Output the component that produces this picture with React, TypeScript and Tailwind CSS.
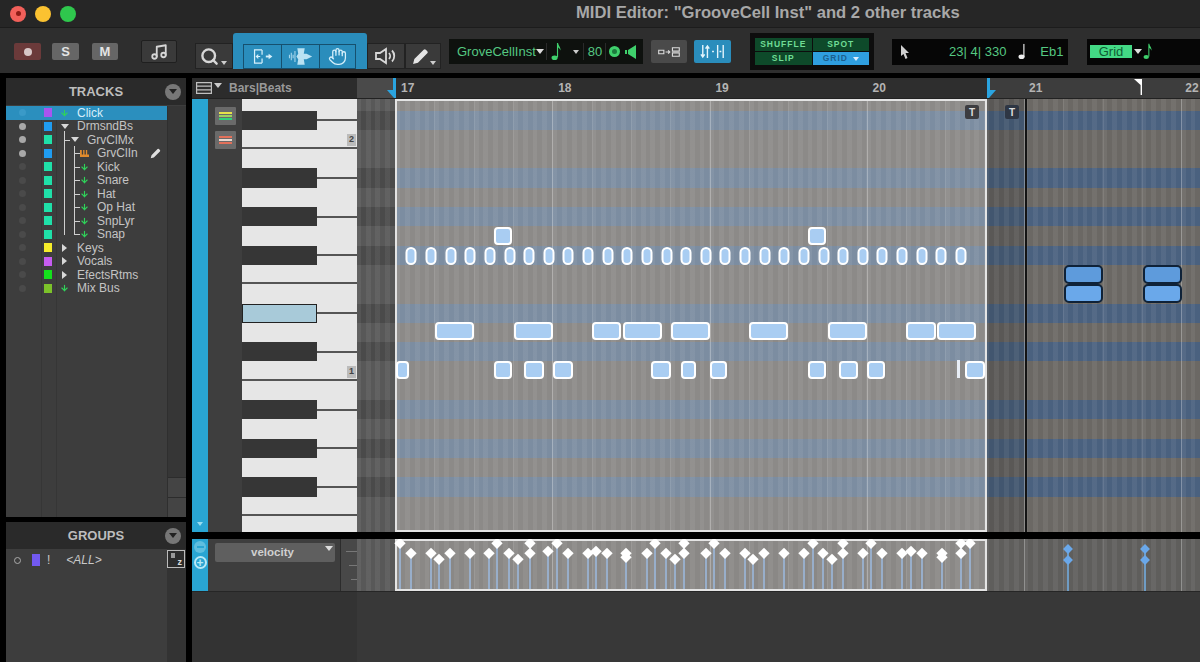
import { ArrowDown, Hand, Music, Search } from "lucide-react";

const tracks = [
	{ name: "Click", color: "bg-[#a855f0]", dot: "bg-[#3a9ac8]", indent: "ml-[8px]", icon: "arrow" },
	{ name: "DrmsndBs", color: "bg-[#1f9cf0]", dot: "bg-[#a8a8a8]", indent: "ml-[8px]", icon: "down" },
	{ name: "GrvClMx", color: "bg-[#1fe0a8]", dot: "bg-[#a8a8a8]", indent: "ml-[18px]", icon: "down" },
	{ name: "GrvClIn", color: "bg-[#1f9cf0]", dot: "bg-[#a8a8a8]", indent: "ml-[28px]", icon: "inst" },
	{ name: "Kick", color: "bg-[#1fe0a8]", dot: "bg-[#4a4a4a]", indent: "ml-[28px]", icon: "arrow" },
	{ name: "Snare", color: "bg-[#1fe0a8]", dot: "bg-[#4a4a4a]", indent: "ml-[28px]", icon: "arrow" },
	{ name: "Hat", color: "bg-[#1fe0a8]", dot: "bg-[#4a4a4a]", indent: "ml-[28px]", icon: "arrow" },
	{ name: "Op Hat", color: "bg-[#1fe0a8]", dot: "bg-[#4a4a4a]", indent: "ml-[28px]", icon: "arrow" },
	{ name: "SnpLyr", color: "bg-[#1fe0a8]", dot: "bg-[#4a4a4a]", indent: "ml-[28px]", icon: "arrow" },
	{ name: "Snap", color: "bg-[#1fe0a8]", dot: "bg-[#4a4a4a]", indent: "ml-[28px]", icon: "arrow" },
	{ name: "Keys", color: "bg-[#f5ec2a]", dot: "bg-[#4a4a4a]", indent: "ml-[8px]", icon: "right" },
	{ name: "Vocals", color: "bg-[#c65cf0]", dot: "bg-[#4a4a4a]", indent: "ml-[8px]", icon: "right" },
	{ name: "EfectsRtms", color: "bg-[#14e01c]", dot: "bg-[#4a4a4a]", indent: "ml-[8px]", icon: "right" },
	{ name: "Mix Bus", color: "bg-[#7cc22a]", dot: "bg-[#4a4a4a]", indent: "ml-[8px]", icon: "arrow" },
];

// one entry per pitch row, top to bottom
const rows = [
	{ black: false, line: false },
	{ black: true, line: false },
	{ black: false, line: true, label: "2" },
	{ black: false, line: false },
	{ black: true, line: false },
	{ black: false, line: false },
	{ black: true, line: false },
	{ black: false, line: false },
	{ black: true, line: false },
	{ black: false, line: true },
	{ black: false, line: false },
	{ black: true, line: false, active: true },
	{ black: false, line: false },
	{ black: true, line: false },
	{ black: false, line: true, label: "1" },
	{ black: false, line: false },
	{ black: true, line: false },
	{ black: false, line: false },
	{ black: true, line: false },
	{ black: false, line: false },
	{ black: true, line: false },
	{ black: false, line: true },
	{ black: false, line: false },
];

const pills = [411, 431, 451, 470, 490, 510, 529, 549, 568, 588, 608, 627, 647, 667, 686, 706, 725, 745, 765, 784, 804, 824, 843, 863, 882, 902, 922, 941, 961];

const notes: [number, number, number][] = [
	[494, 512, 236], [808, 826, 236],
	[435, 474, 331], [514, 553, 331], [592, 621, 331], [623, 662, 331], [671, 710, 331], [749, 788, 331], [828, 867, 331], [906, 936, 331], [937, 976, 331],
	[396, 409, 370], [494, 512, 370], [524, 544, 370], [553, 573, 370], [651, 671, 370], [681, 696, 370], [710, 727, 370], [808, 826, 370], [839, 858, 370], [867, 885, 370], [965, 985, 370],
];

const velocities: [number, number][] = [
	[400, 543], [411, 553], [431, 553], [439, 559], [450, 553], [470, 553], [489, 553], [497, 543], [509, 553], [518, 559], [530, 543], [530, 553], [548, 551], [557, 543], [568, 553], [588, 553], [596, 551], [607, 553], [626, 553], [626, 557], [647, 553], [655, 543], [666, 553], [675, 559], [684, 543], [684, 553], [706, 553], [714, 543], [725, 553], [745, 553], [753, 559], [764, 553], [784, 553], [804, 553], [813, 543], [823, 553], [832, 559], [843, 543], [843, 553], [863, 553], [871, 543], [882, 553], [902, 553], [911, 551], [922, 553], [942, 553], [942, 557], [961, 543], [961, 553], [970, 543],
];

const outVelocities: [number, number][] = [[1068, 549], [1068, 560], [1145, 549], [1145, 560]];

const gridLines =
	"bg-[repeating-linear-gradient(90deg,rgba(255,255,255,.2)_0,rgba(255,255,255,.2)_1px,transparent_1px,transparent_157.2px),repeating-linear-gradient(90deg,rgba(255,255,255,.09)_0,rgba(255,255,255,.09)_1px,transparent_1px,transparent_39.3px),repeating-linear-gradient(90deg,rgba(255,255,255,.06)_0,rgba(255,255,255,.06)_4.9px,transparent_4.9px,transparent_9.82px)]";

function NoteGlyph({ className }: { className: string }) {
	return (
		<svg viewBox="0 0 10 20" className={className} fill="currentColor">
			<ellipse cx="3.5" cy="16.5" rx="3.2" ry="2.4" />
			<path d="M6 16V1h1.2c.3 3 2.8 4 2.6 8-.8-2-2-3-2.6-3.2V16z" />
		</svg>
	);
}

function TrackIcon({ icon }: { icon: string }) {
	if (icon === "arrow")
		return <ArrowDown size={12} strokeWidth={3} className="text-[#2fd45a]" />;
	if (icon === "down")
		return <div className="h-0 w-0 border-x-[4px] border-t-[5px] border-x-transparent border-t-[#d8d8d8]" />;
	if (icon === "right")
		return <div className="h-0 w-0 border-y-[4px] border-l-[5px] border-y-transparent border-l-[#d8d8d8]" />;
	return (
		<svg viewBox="0 0 10 8" className="h-[9px] w-[11px] text-[#e08a2c]" fill="currentColor">
			<path d="M0 0h2v5h1.5V0h1.5v5h1.5V0H8v5h2v3H0z" />
		</svg>
	);
}

function SmallPencil({ className }: { className: string }) {
	return (
		<svg viewBox="0 0 16 16" className={className} fill="currentColor">
			<path d="M1 15l1.2-4.6L11 1.6a1.4 1.4 0 012 0l1.4 1.4a1.4 1.4 0 010 2L5.6 13.8z" />
		</svg>
	);
}

function SidebarHeader({ title }: { title: string }) {
	return (
		<div className="flex h-[27px] items-center bg-[#2a2a2a]">
			<div className="w-[180px] text-center text-[13px] font-bold text-[#bdbdbd]">{title}</div>
			<div className="absolute left-[159px] flex h-[16px] w-[16px] items-center justify-center rounded-full bg-[#777]">
				<div className="h-0 w-0 border-x-[4px] border-t-[5px] border-x-transparent border-t-[#222]" />
			</div>
		</div>
	);
}

function Sidebar() {
	return (
		<aside className="ml-[6px] flex w-[180px] flex-col gap-[5px]">
			<div className="relative flex h-[439px] flex-col bg-[#3d3d3d]">
				<SidebarHeader title="TRACKS" />
				<div className="mt-[1px] flex flex-1">
					<div className="relative w-[161px]">
						<div className="absolute inset-y-0 left-[35px] w-px bg-[#363636]" />
						<div className="absolute inset-y-0 left-[50px] w-px bg-[#363636]" />
						<div className="absolute left-[58px] top-[25px] h-[104px] w-px bg-[#cfcfcf]" />
						<div className="absolute left-[68px] top-[40px] h-[89px] w-px bg-[#cfcfcf]" />
						<div className="absolute left-[59px] top-[34px] h-px w-[5px] bg-[#cfcfcf]" />
						{[47, 61, 74, 88, 101, 115, 128].map((y) => (
							<div key={y} className="absolute left-[69px] h-px w-[5px] bg-[#cfcfcf]" style={{ top: y }} />
						))}
						{tracks.map((t, i) => (
							<div
								key={t.name}
								className={`relative flex h-[13.5px] items-center ${i === 0 ? "bg-[#2b8fbe]" : ""}`}
							>
								<div className={`ml-[13px] h-[7px] w-[7px] rounded-full ${t.dot}`} />
								<div className={`ml-[18px] h-[9px] w-[8px] ${t.color}`} />
								<div className={`${t.indent} flex w-[9px] shrink-0 justify-center`}>
									<TrackIcon icon={t.icon} />
								</div>
								<span className={`ml-[8px] text-[12px] leading-none ${i === 0 ? "text-[#d6eefa]" : "text-[#c4c4c4]"}`}>{t.name}</span>
								{t.icon === "inst" && <SmallPencil className="ml-[12px] h-[11px] w-[11px] text-[#e0e0e0]" />}
							</div>
						))}
					</div>
					<div className="flex flex-1 flex-col justify-end border-l border-[#2f2f2f] bg-[#363636]">
						<div className="h-[20px] border-t border-[#2c2c2c] bg-[#444]" />
						<div className="h-[20px] border-t border-[#2c2c2c] bg-[#444]" />
					</div>
				</div>
			</div>
			<div className="relative flex flex-1 flex-col bg-[#3d3d3d]">
				<SidebarHeader title="GROUPS" />
				<div className="flex flex-1">
					<div className="flex h-[20px] w-[161px] items-center pt-[2px]">
						<div className="ml-[8px] h-[7px] w-[7px] rounded-full border border-[#aaa]" />
						<div className="ml-[11px] h-[12px] w-[8px] bg-[#7259f0]" />
						<span className="ml-[7px] text-[12px] text-[#c8c8c8]">!</span>
						<span className="ml-[16px] text-[12px] italic text-[#c8c8c8]">&lt;ALL&gt;</span>
					</div>
					<div className="flex flex-1 flex-col bg-[#333]">
						<div className="relative mt-[1px] flex h-[18px] w-[18px] items-end justify-end border border-[#bbb] bg-[#2c2c2c] pr-[2px] text-[9px] font-bold leading-none text-[#ddd]">
							<div className="absolute left-[3px] top-[2px] h-[5px] w-[4px] bg-[#999]" />
							z
						</div>
					</div>
				</div>
			</div>
		</aside>
	);
}

function ToolBtn({ children, className }: { children: React.ReactNode; className: string }) {
	return <div className={`flex items-center justify-center ${className}`}>{children}</div>;
}

function Toolbar() {
	return (
		<div className="flex h-[46px] items-center border-t border-[#1c1c1c] bg-[#2e2e2e] pl-[14px] pt-[2px]">
			<ToolBtn className="h-[17px] w-[27px] rounded-[2px] bg-[#6b3a3a]">
				<div className="h-[8px] w-[8px] rounded-full bg-[#d8c8c8]" />
			</ToolBtn>
			<ToolBtn className="ml-[11px] h-[17px] w-[27px] rounded-[2px] bg-[#666] text-[13px] font-bold text-[#e4e4e4]">S</ToolBtn>
			<ToolBtn className="ml-[13px] h-[17px] w-[26px] rounded-[2px] bg-[#666] text-[13px] font-bold text-[#e4e4e4]">M</ToolBtn>
			<ToolBtn className="ml-[23px] h-[23px] w-[36px] rounded-[2px] border border-[#1f1f1f] bg-[#3a3a3a]">
				<Music size={18} strokeWidth={2.4} className="text-[#d6d6d6]" />
			</ToolBtn>
			<ToolBtn className="relative mb-[4px] ml-[18px] h-[26px] w-[38px] self-end border border-[#222] bg-[#3a3a3a]">
				<Search size={19} strokeWidth={3} className="mr-[10px] text-[#d8d8d8]" />
				<div className="absolute bottom-[3px] right-[5px] h-0 w-0 border-x-[3px] border-t-[4px] border-x-transparent border-t-[#ccc]" />
			</ToolBtn>
			<div className="mb-[4px] flex h-[36px] w-[134px] items-end self-end rounded-t-[3px] bg-[#2a8dbc] pl-[10px]">
				<ToolBtn className="h-[25px] w-[39px] border border-[#16506e] bg-[#2a8dbc]">
					<svg viewBox="0 0 24 16" className="h-[15px] w-[24px] text-[#d6f0fb]" fill="none" stroke="currentColor" strokeWidth="1.3">
						<path d="M11 1H3v14h8M11 1v5M11 10v5M9 8H5M7 6L5 8l2 2" />
						<path d="M15 8h4" strokeWidth="2" />
						<path d="M18 5l4 3-4 3z" fill="currentColor" stroke="none" />
					</svg>
				</ToolBtn>
				<ToolBtn className="h-[25px] w-[38px] border-y border-r border-[#16506e] bg-[#2a8dbc]">
					<svg viewBox="0 0 28 18" className="h-[17px] w-[26px] text-[#b9e2f3]" fill="currentColor">
						<path d="M1 7h1v4H1zM3 5h1v8H3zM5 7h1v4H5zM7 3h1v12H7z" />
						<path d="M10 0h8l-1 6h3l6 3-6 3h-3l1 6h-8l1-6-2-3 2-3z" />
					</svg>
				</ToolBtn>
				<ToolBtn className="h-[25px] w-[36px] border-y border-r border-[#16506e] bg-[#2a8dbc]">
					<Hand size={19} strokeWidth={1.6} className="text-[#d6f0fb]" />
				</ToolBtn>
			</div>
			<ToolBtn className="mb-[4px] h-[26px] w-[38px] self-end border border-[#222] bg-[#3a3a3a]">
				<svg viewBox="0 0 22 18" className="h-[18px] w-[22px] text-[#d8d8d8]" fill="none" stroke="currentColor" strokeWidth="1.8">
					<path d="M1 6h4l6-4v14l-6-4H1zM14 6c1.5 1.6 1.5 4.4 0 6M17 3.5c3 3 3 8 0 11" />
				</svg>
			</ToolBtn>
			<ToolBtn className="relative mb-[4px] h-[26px] w-[36px] self-end border border-[#222] bg-[#3a3a3a]">
				<SmallPencil className="mr-[6px] h-[17px] w-[17px] text-[#e4e4e4]" />
				<div className="absolute bottom-[3px] right-[4px] h-0 w-0 border-x-[3px] border-t-[4px] border-x-transparent border-t-[#ccc]" />
			</ToolBtn>
			<div className="ml-[8px] flex h-[25px] w-[194px] items-center bg-[#0e110e] pl-[8px] text-[13px] text-[#55c882]">
				<span>GroveCellInst</span>
				<div className="h-0 w-0 border-x-[4px] border-t-[5px] border-x-transparent border-t-[#ddd]" />
				<div className="ml-[2px] h-[17px] w-px bg-[#2a2a2a]" />
				<NoteGlyph className="ml-[4px] h-[19px] w-[10px] text-[#3fd06c]" />
				<div className="ml-[12px] h-0 w-0 border-x-[3px] border-t-[4px] border-x-transparent border-t-[#ccc]" />
				<div className="ml-[4px] h-[17px] w-px bg-[#2a2a2a]" />
				<span className="ml-[4px]">80</span>
				<div className="ml-[3px] h-[17px] w-px bg-[#2a2a2a]" />
				<div className="ml-[3px] flex h-[11px] w-[11px] items-center justify-center rounded-full bg-[#3fd06c]">
					<div className="h-[5px] w-[5px] rounded-full bg-[#1d7a3e]" />
				</div>
				<svg viewBox="0 0 11 14" className="ml-[5px] h-[14px] w-[11px] text-[#3fd06c]" fill="currentColor">
					<path d="M0 5h2v4H0zM3 5l8-5v14L3 9z" />
				</svg>
			</div>
			<ToolBtn className="ml-[8px] h-[23px] w-[36px] rounded-[2px] bg-[#4a4a4a]">
				<svg viewBox="0 0 26 14" className="h-[12px] w-[24px] text-[#dcdcdc]" fill="none" stroke="currentColor" strokeWidth="1.3">
					<path d="M1 5h6v4H1zM9 7h5M12 5l2 2-2 2M17 2h8v4h-8zM17 8h8v4h-8z" />
				</svg>
			</ToolBtn>
			<ToolBtn className="ml-[7px] h-[23px] w-[37px] rounded-[2px] bg-[#2a8dbc]">
				<svg viewBox="0 0 28 16" className="h-[15px] w-[26px] text-[#e4f5fc]" fill="none" stroke="currentColor" strokeWidth="1.5">
					<path d="M3 1v13M1 11l2 3 2-3M8 15V2M6 5l2-3 2 3M13 8h2M19 1v14M25 1v14M21 8h2" />
				</svg>
			</ToolBtn>
			<div className="ml-[19px] grid h-[37px] w-[124px] grid-cols-2 gap-px bg-[#0d0d0d] p-[5px] text-[8.5px] font-bold leading-none tracking-[1px] text-[#6fdc95]">
				<div className="flex items-center justify-center bg-[#0e4a2a]">SHUFFLE</div>
				<div className="flex items-center justify-center bg-[#0e4a2a]">SPOT</div>
				<div className="flex items-center justify-center bg-[#0e4a2a]">SLIP</div>
				<div className="flex items-center justify-center bg-[#2f9fe0] text-[#1c5f8e]">
					GRID
					<div className="ml-[5px] h-0 w-0 border-x-[3px] border-t-[4px] border-x-transparent border-t-[#dcefff]" />
				</div>
			</div>
			<div className="ml-[18px] flex h-[26px] w-[176px] items-center bg-[#060606] pl-[8px] text-[13px] text-[#55c882]">
				<svg viewBox="0 0 10 14" className="h-[14px] w-[10px] text-[#cfcfcf]" fill="currentColor">
					<path d="M1 0l8 8H5.5l2 5-2 1-2-5L1 11z" />
				</svg>
				<span className="ml-[39px]">23| 4| 330</span>
				<svg viewBox="0 0 8 18" className="ml-[12px] h-[17px] w-[8px] text-[#eee]" fill="currentColor">
					<ellipse cx="3.5" cy="14.5" rx="3.2" ry="2.4" />
					<rect x="5.4" y="1" width="1.2" height="14" />
				</svg>
				<span className="ml-[14px]">Eb1</span>
			</div>
			<div className="ml-[19px] flex h-[26px] flex-1 items-center bg-[#060606] pl-[3px]">
				<div className="flex h-[13px] w-[42px] items-center justify-center bg-[#43d985] text-[13px] text-[#0f5c33]">Grid</div>
				<div className="ml-[2px] h-0 w-0 border-x-[4px] border-t-[5px] border-x-transparent border-t-[#ddd]" />
				<NoteGlyph className="ml-[1px] h-[17px] w-[9px] text-[#3fd06c]" />
			</div>
		</div>
	);
}

function Ruler() {
	return (
		<div className="relative flex h-[21px] border-b border-[#222] text-[12px] font-bold text-[#b4b4b4]">
			<div className="flex w-[165px] items-center bg-[#2c2c2c] pl-[4px]">
				<svg viewBox="0 0 16 12" className="h-[12px] w-[16px] text-[#c0c0c0]" fill="none" stroke="currentColor" strokeWidth="1.2">
					<path d="M.6.6h14.8v10.8H.6zM.6 4.2h14.8M.6 7.8h14.8" />
				</svg>
				<div className="mb-[6px] ml-[2px] h-0 w-0 border-x-[4px] border-t-[5px] border-x-transparent border-t-[#ccc]" />
				<span className="ml-[7px] text-[#999]">Bars|Beats</span>
			</div>
			<div className="w-[38px] bg-[#4a4a4a]" />
			{["17", "18", "19"].map((b) => (
				<div key={b} className="flex w-[157.2px] shrink-0 items-center bg-[#2e2e2e] pl-[6px]">
					{b}
				</div>
			))}
			<div className="flex w-[120.4px] shrink-0 items-center bg-[#2e2e2e] pl-[6px]">20</div>
			<div className="flex flex-1 items-center bg-[#3d3d3d]">
				<span className="ml-[42px]">21</span>
				<span className="ml-[143px]">22</span>
			</div>
			<svg viewBox="0 0 9 20" className="absolute left-[195px] top-0 h-[20px] w-[9px] text-[#2aa4e0]" fill="currentColor">
				<path d="M9 0v20H7L0 12h6V0z" />
			</svg>
			<svg viewBox="0 0 9 20" className="absolute left-[795px] top-0 h-[20px] w-[9px] text-[#2aa4e0]" fill="currentColor">
				<path d="M0 0v20h2l7-8H3V0z" />
			</svg>
			<svg viewBox="0 0 9 18" className="absolute left-[942px] top-0 h-[18px] w-[9px] text-white" fill="currentColor">
				<path d="M0 1h8v16H6.6V7z" />
			</svg>
		</div>
	);
}

function Keys() {
	return (
		<div className="flex w-[115px] flex-col">
			{rows.map((r, i) => {
				const h = i === 0 ? "h-[11.6px]" : i === rows.length - 1 ? "h-[16.1px]" : "h-[19.3px]";
				if (r.black)
					return (
						<div key={i} className={`flex ${h} bg-[#e6e6e6]`}>
							<div className={`w-[75px] ${r.active ? "border border-[#222] bg-[#a8cad9]" : "bg-[#363636]"}`} />
							<div className="flex flex-1 items-center">
								<div className="h-[2px] w-full bg-[#555]" />
							</div>
						</div>
					);
				return (
					<div key={i} className={`flex ${h} items-end justify-end bg-[#e6e6e6] ${r.line ? "border-b-2 border-[#555]" : ""}`}>
						{r.label && (
							<span className="mb-[1px] mr-px flex h-[12px] w-[9px] items-center justify-center bg-[#bbb] text-[9px] font-bold text-[#444]">{r.label}</span>
						)}
					</div>
				);
			})}
		</div>
	);
}

function Grid() {
	return (
		<div className="relative flex flex-1 flex-col overflow-hidden">
			{rows.map((r, i) => {
				const h = i === 0 ? "h-[11.6px]" : i === rows.length - 1 ? "h-[16.1px]" : "h-[19.3px]";
				return (
					<div key={i} className={`flex ${h}`}>
						<div className={`w-[38px] ${r.black ? "bg-[#4a4a4a]" : "bg-[#585858]"}`} />
						<div className={`w-[592px] ${r.black ? "bg-[#7c8da1]" : "bg-[#8c8a88]"}`} />
						<div className={`w-[38px] ${r.black ? "bg-[#42566f]" : "bg-[#5a5856]"}`} />
						<div className={`flex-1 ${r.black ? "bg-[#4a617f]" : "bg-[#6b6864]"}`} />
					</div>
				);
			})}
			<div className={`absolute inset-y-0 left-[-119.2px] right-0 ${gridLines}`} />
			<div className="absolute inset-y-0 left-[38px] w-[592px] border-2 border-[#e4e4e4]" />
			<div className="absolute inset-y-0 left-[668px] w-[2px] bg-[#141414]" />
			<div className="absolute left-[608px] top-[6px] flex h-[14px] w-[14px] items-center justify-center rounded-[2px] bg-[#3c3c40] text-[10px] font-bold text-[#ddd]">T</div>
			<div className="absolute left-[648px] top-[6px] flex h-[14px] w-[14px] items-center justify-center rounded-[2px] bg-[#2e3644] text-[10px] font-bold text-[#ddd]">T</div>
			{pills.map((x) => (
				<div
					key={x}
					className="absolute h-[18px] w-[11px] -translate-x-1/2 -translate-y-1/2 rounded-full border-2 border-white bg-[#a9cdf2]"
					style={{ left: x - 357, top: 255.5 - 99 }}
				/>
			))}
			{notes.map(([a, b, y]) => (
				<div
					key={`${a}-${y}`}
					className="absolute h-[18px] -translate-y-1/2 rounded-[4px] border-2 border-white bg-[#a9cdf2]"
					style={{ left: a - 357, width: b - a, top: y - 99 }}
				/>
			))}
			<div className="absolute left-[600px] top-[261px] h-[18px] w-[3px] bg-[#e8eef6]" />
			{[1064, 1143].map((x) => (
				<div key={x}>
					<div className="absolute top-[166px] h-[19px] w-[39px] rounded-[5px] border-2 border-[#0f2238] bg-[#5e9bdc]" style={{ left: x - 357 }} />
					<div className="absolute top-[185px] h-[19px] w-[39px] rounded-[5px] border-2 border-[#0f2238] bg-[#6aa8ea]" style={{ left: x - 357 }} />
				</div>
			))}
		</div>
	);
}

function Strip({ bottom }: { bottom: React.ReactNode }) {
	return <div className="flex w-[16px] flex-col items-center bg-[#29a5d3]">{bottom}</div>;
}

function VelocityLane() {
	return (
		<div className="flex h-[52px]">
			<Strip
				bottom={
					<>
						<div className="mt-[2px] flex h-[12px] w-[12px] items-center justify-center rounded-full bg-[#5fbedf]">
							<div className="h-[2px] w-[7px] bg-[#29a5d3]" />
						</div>
						<div className="mt-[3px] flex h-[13px] w-[13px] items-center justify-center rounded-full border-2 border-[#b8e8f6] text-[12px] font-bold leading-none text-[#b8e8f6]">+</div>
					</>
				}
			/>
			<div className="flex w-[132px] flex-col bg-[#3e3e3e] pl-[7px] pt-[4px]">
				<div className="relative flex h-[19px] w-[120px] items-center justify-center rounded-[2px] bg-[#5f5f5f] pr-[5px] text-[11.5px] font-bold text-[#d0d0d0]">
					velocity
					<div className="absolute right-[2px] top-[3px] h-0 w-0 border-x-[4px] border-t-[5px] border-x-transparent border-t-[#ddd]" />
				</div>
			</div>
			<div className="flex w-[17px] flex-col items-end justify-around border-l border-[#2c2c2c] bg-[#484848] py-[5px]">
				<div className="h-px w-[11px] bg-[#777]" />
				<div className="h-px w-[8px] bg-[#777]" />
				<div className="h-px w-[6px] bg-[#777]" />
			</div>
			<div className="relative flex flex-1 overflow-hidden">
				<div className="w-[38px] bg-[#585858]" />
				<div className="w-[592px] bg-[#8a8886]" />
				<div className="flex-1 bg-[#5f5e5c]" />
				<div className={`absolute inset-y-0 left-[-119.2px] right-0 ${gridLines}`} />
				<div className="absolute inset-y-0 left-[38px] w-[592px] border-2 border-[#e4e4e4]" />
				{velocities.map(([x, y], i) => (
					<div key={i}>
						<div className="absolute bottom-[2px] w-[2px] bg-[#98aeca]" style={{ left: x - 358, top: y - 539 }} />
						<div className="absolute h-[7.5px] w-[7.5px] -translate-x-1/2 -translate-y-1/2 rotate-45 bg-white" style={{ left: x - 357, top: y - 539 }} />
					</div>
				))}
				{outVelocities.map(([x, y], i) => (
					<div key={i}>
						<div className="absolute bottom-0 w-[2px] bg-[#6f9cc4]" style={{ left: x - 358, top: y - 539 }} />
						<div className="absolute h-[7px] w-[7px] -translate-x-1/2 -translate-y-1/2 rotate-45 bg-[#6aa8ea]" style={{ left: x - 357, top: y - 539 }} />
					</div>
				))}
			</div>
		</div>
	);
}

export default function App() {
	return (
		<div className="flex h-[662px] w-[1200px] flex-col overflow-hidden bg-black font-['Liberation_Sans',Arial,sans-serif]">
			<div className="flex h-[27px] shrink-0 items-center bg-[#262626] pl-[10px]">
				<div className="flex h-[16px] w-[16px] items-center justify-center rounded-full bg-[#f2605a]">
					<div className="h-[5px] w-[5px] rounded-full bg-[#8c1c16]" />
				</div>
				<div className="ml-[9px] h-[16px] w-[16px] rounded-full bg-[#fbc231]" />
				<div className="ml-[9px] h-[16px] w-[16px] rounded-full bg-[#2fc74d]" />
				<div className="ml-[500px] whitespace-nowrap text-[16.6px] font-bold text-[#a8a8a8]">MIDI Editor: "GrooveCell Inst" and 2 other tracks</div>
			</div>
			<Toolbar />
			<div className="mt-[5px] flex flex-1 gap-[6px]">
				<Sidebar />
				<div className="flex flex-1 flex-col">
					<Ruler />
					<div className="flex h-[433px]">
						<Strip
							bottom={
								<div className="mb-[6px] mt-auto h-0 w-0 border-x-[3px] border-t-[4px] border-x-transparent border-t-[#9adcf0]" />
							}
						/>
						<div className="flex w-[34px] flex-col items-center gap-[6px] bg-[#3e3e3e] pt-[8px]">
							<div className="flex h-[18px] w-[21px] flex-col items-center justify-center gap-px rounded-[1px] bg-[#6a6a6a]">
								<div className="h-[2px] w-[13px] bg-[#e6e24a]" />
								<div className="h-[2px] w-[13px] bg-[#9ed060]" />
								<div className="h-[2px] w-[13px] bg-[#2fd07a]" />
							</div>
							<div className="flex h-[18px] w-[21px] flex-col items-center justify-center gap-px rounded-[1px] bg-[#6a6a6a]">
								<div className="h-[2px] w-[13px] bg-[#e2705a]" />
								<div className="h-[2px] w-[13px] bg-[#e8d8d0]" />
								<div className="h-[2px] w-[13px] bg-[#e2705a]" />
							</div>
						</div>
						<Keys />
						<Grid />
					</div>
					<div className="h-[7px] bg-black" />
					<VelocityLane />
					<div className="flex flex-1 border-t border-[#262626]">
						<div className="w-[165px] bg-[#333]" />
						<div className="flex-1 bg-[#383838]" />
					</div>
				</div>
			</div>
		</div>
	);
}
